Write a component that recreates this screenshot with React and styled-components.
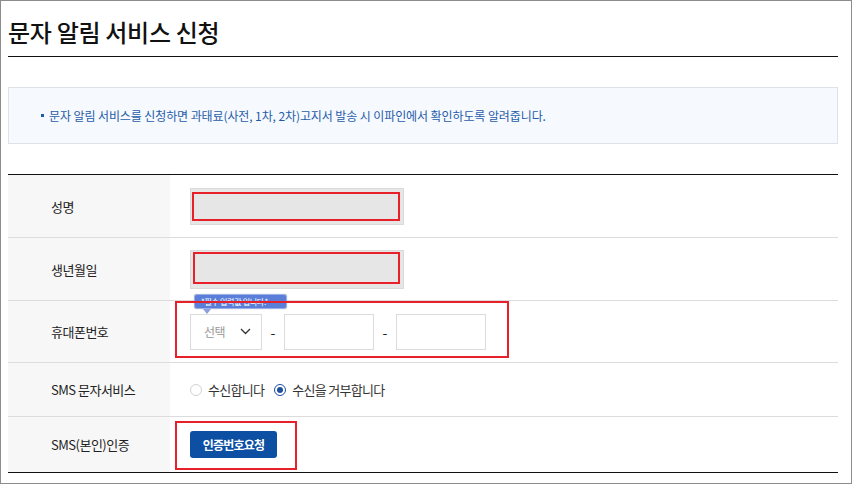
import React from 'react';
import styled, { createGlobalStyle } from 'styled-components';

const GlobalStyle = createGlobalStyle`
  html, body {
    margin: 0;
    padding: 0;
    background: #fff;
  }
  body {
    font-family: "Noto Sans CJK KR", "Noto Sans", sans-serif;
    color: #222;
  }
`

const Frame = styled.div`
  width: 852px;
  height: 484px;
  box-sizing: border-box;
  border: 1px solid #8c8c8c;
  padding: 0 13px 0 7px;
  overflow: hidden;
`
const Title = styled.h2`
  margin: 0;
  height: 56px;
  box-sizing: border-box;
  padding-top: 15px;
  line-height: 32px;
  font-size: 24px;
  font-weight: 500;
  letter-spacing: -0.3px;
  color: #111;
  border-bottom: 1px solid #111;
`
const InfoBox = styled.div`
  margin-top: 30px;
  height: 57px;
  box-sizing: border-box;
  border: 1px solid #dde2e8;
  background: #f6f9fe;
  display: flex;
  align-items: center;
  padding-left: 32px;
  font-size: 12px;
  letter-spacing: -0.1px;
  color: #1f5ca8;
  &::before {
    content: '';
    width: 3px;
    height: 3px;
    background: #1f5ca8;
    margin-right: 5px;
  }
`
const Table = styled.div`
  margin-top: 30px;
  border-top: 1px solid #111;
  border-bottom: 1px solid #111;
`
const Row = styled.div`
  display: grid;
  grid-template-columns: 162px 1fr;
  height: ${p => p.$h}px;
  box-sizing: border-box;
  border-bottom: 1px solid #dcdcdc;
  &:last-child {
    border-bottom: 0;
  }
`
const Label = styled.div`
  background: #f7f7f7;
  display: flex;
  align-items: center;
  padding-left: 43px;
  font-size: 13px;
  letter-spacing: -0.5px;
  color: #222;
  white-space: pre;
`
const Cell = styled.div`
  position: relative;
  display: flex;
  align-items: center;
  padding-left: 20px;
`
const GrayInput = styled.div`
  width: 214px;
  height: ${p => p.$h}px;
  box-sizing: border-box;
  background: #e6e6e6;
  border: 1px solid #dadada;
`
const RedMark = styled.span`
  position: absolute;
  left: ${p => p.$l}px;
  top: ${p => p.$t}px;
  width: ${p => p.$w}px;
  height: ${p => p.$h}px;
  box-sizing: border-box;
  border: 2px solid #e8202a;
  pointer-events: none;
`
const SelectBox = styled.div`
  position: relative;
  width: 72px;
  height: 36px;
  box-sizing: border-box;
  border: 1px solid #dcdcdc;
  display: flex;
  align-items: center;
  justify-content: space-between;
  padding: 0 10px 0 13px;
  font-size: 12px;
  letter-spacing: -0.5px;
  color: #999;
`
const Tooltip = styled.div`
  position: absolute;
  left: 3px;
  top: -21px;
  width: 93px;
  height: 15px;
  box-sizing: border-box;
  background: #5b7fd9;
  border: 1px solid #9bb0e8;
  border-radius: 3px;
  box-shadow: 0 0 1px rgba(0, 0, 0, 0.4);
  color: #fff;
  font-size: 8px;
  line-height: 13px;
  letter-spacing: -0.3px;
  padding-left: 6px;
  white-space: nowrap;
  &::after {
    content: '';
    position: absolute;
    left: 8px;
    bottom: -6px;
    border-left: 4px solid transparent;
    border-right: 4px solid transparent;
    border-top: 5px solid #8aa0dd;
  }
`
const PhoneInput = styled.div`
  width: 90px;
  height: 36px;
  box-sizing: border-box;
  border: 1px solid #dcdcdc;
  background: #fff;
`
const Dash = styled.span`
  width: 22px;
  text-align: center;
  font-size: 14px;
  color: #222;
`
const RadioGroup = styled.div`
  display: flex;
  align-items: center;
  gap: 10px;
  font-size: 13px;
  letter-spacing: -0.7px;
  color: #333;
  white-space: pre;
`
const RadioLabel = styled.label`
  display: inline-flex;
  align-items: center;
  gap: 6px;
`
const RadioDot = styled.span`
  width: 12px;
  height: 12px;
  box-sizing: border-box;
  border-radius: 50%;
  border: ${p => (p.$on ? '1.5px solid #1d4f9f' : '1px solid #d2d2d2')};
  background: #fff;
  display: inline-flex;
  align-items: center;
  justify-content: center;
  &::after {
    content: '';
    width: 6px;
    height: 6px;
    border-radius: 50%;
    background: ${p => (p.$on ? '#1d4f9f' : 'transparent')};
  }
`
const Button = styled.button`
  width: 87px;
  height: 27px;
  border: 0;
  border-radius: 3px;
  background: #0c4fa3;
  color: #fff;
  font-family: inherit;
  font-size: 12px;
  font-weight: bold;
  letter-spacing: -0.8px;
  padding: 0;
`

const Chevron = () => (
  <svg width="11" height="7" viewBox="0 0 11 7">
    <path d="M1 1 L5.5 5.5 L10 1" fill="none" stroke="#333" strokeWidth="1.3" />
  </svg>
)

export default function App() {
  return (
    <Frame>
      <GlobalStyle />
      <Title>문자 알림 서비스 신청</Title>
      <InfoBox>문자 알림 서비스를 신청하면 과태료(사전, 1차, 2차)고지서 발송 시 이파인에서 확인하도록 알려줍니다.</InfoBox>
      <Table>
        <Row $h={63}>
          <Label>성명</Label>
          <Cell>
            <GrayInput $h={37} />
            <RedMark $l={22} $t={17} $w={208} $h={29} />
          </Cell>
        </Row>
        <Row $h={63}>
          <Label>생년월일</Label>
          <Cell>
            <GrayInput $h={39} />
            <RedMark $l={23} $t={14} $w={207} $h={32} />
          </Cell>
        </Row>
        <Row $h={62}>
          <Label>휴대폰번호</Label>
          <Cell>
            <SelectBox>
              선택
              <Chevron />
              <Tooltip>*필수 입력값 입니다.*</Tooltip>
            </SelectBox>
            <Dash>-</Dash>
            <PhoneInput />
            <Dash>-</Dash>
            <PhoneInput />
            <RedMark $l={5} $t={0} $w={334} $h={57} />
          </Cell>
        </Row>
        <Row $h={54}>
          <Label>SMS 문자서비스</Label>
          <Cell>
            <RadioGroup>
              <RadioLabel><RadioDot />수신합니다</RadioLabel>
              <RadioLabel><RadioDot $on />수신을 거부합니다</RadioLabel>
            </RadioGroup>
          </Cell>
        </Row>
        <Row $h={55}>
          <Label>SMS(본인)인증</Label>
          <Cell>
            <Button>인증번호요청</Button>
            <RedMark $l={5} $t={4} $w={122} $h={49} />
          </Cell>
        </Row>
      </Table>
    </Frame>
  );
}
